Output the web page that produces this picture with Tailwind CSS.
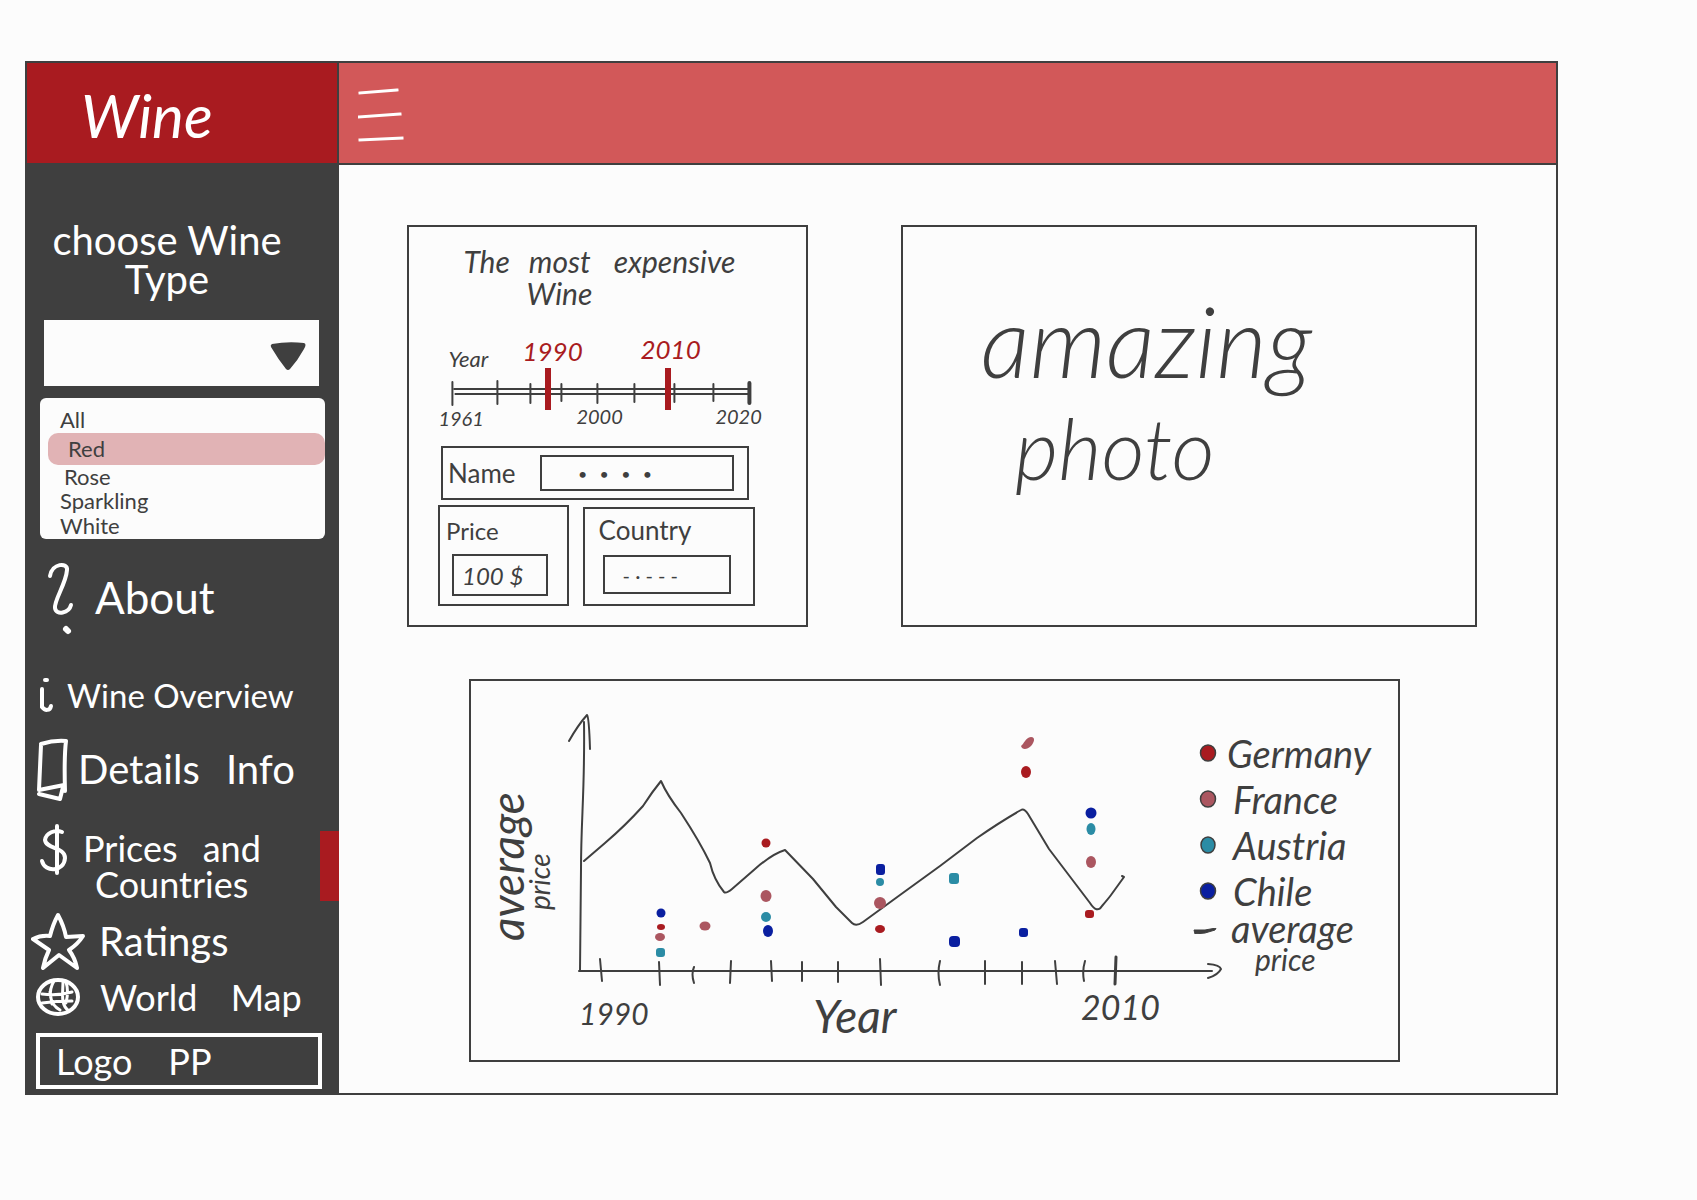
<!DOCTYPE html>
<html lang="en">
<head>
<meta charset="utf-8">
<meta name="viewport" content="width=device-width, initial-scale=1">
<title>Wine – Prices and Countries</title>
<script src="https://cdn.jsdelivr.net/npm/@tailwindcss/browser@4"></script>
</head>
<body class="min-h-screen bg-[#fcfcfc] pt-[61px] pr-[139px] pb-[60px] pl-[25px] font-['Lato','Open_Sans',sans-serif] text-[#3f3f3f]">
<div class="border-2 border-[#3f3f3f]">

  <header class="flex h-[102px] border-b-2 border-[#3f3f3f] bg-[#d25859]">
    <div class="flex w-[312px] shrink-0 items-center border-r-2 border-[#3f3f3f] bg-[#a91b20] pt-1 pl-[54px]">
      <a href="#" class="text-[60px] leading-[64px] text-white italic">Wine</a>
    </div>
    <button type="button" aria-label="Toggle menu" class="ml-[19px] self-center pt-0.5">
      <svg class="h-[56px] w-[48px]" viewBox="0 0 48 56" fill="none" stroke="#fff" stroke-width="3" stroke-linecap="square"><path d="M2 7L39 4M1 31L42 28M2 54L44 52"/></svg>
    </button>
  </header>

  <div class="flex">
    <aside class="flex w-[312px] shrink-0 flex-col bg-[#3f3f3f] pb-1 text-white">
      <label for="type" class="pt-[56px] pr-8 text-center text-[40px] leading-[39px]">choose Wine<br>Type</label>
      <div class="relative mt-[21px] mr-5 ml-[17px]">
        <select id="type" class="block h-[66px] w-full appearance-none bg-[#fcfcfc] px-4 text-[22px] text-[#3f3f3f]">
          <option></option><option>All</option><option>Red</option><option>Rose</option><option>Sparkling</option><option>White</option>
        </select>
        <svg class="pointer-events-none absolute top-[21px] right-3 h-[30px] w-[38px]" viewBox="0 0 38 30"><path d="M3 3Q19 0 35 2Q38 3 35 8Q29 19 21 28Q19 30 17 28Q9 18 2 6Q1 4 3 3Z" fill="#3f3f3f"/></svg>
      </div>
      <ul class="mt-3 mr-[14px] ml-[13px] rounded-[6px] bg-[#fcfcfc] pt-2 text-[22px] text-[#3f3f3f]">
        <li><button type="button" class="block h-[27px] w-full pl-[20px] text-left leading-[27px]">All</button></li>
        <li class="pl-2"><button type="button" aria-pressed="true" class="block h-8 w-full rounded-[10px] bg-[#e1b3b5] pl-[20px] text-left leading-8">Red</button></li>
        <li><button type="button" class="block h-6 w-full pl-[24px] text-left leading-6">Rose</button></li>
        <li><button type="button" class="block h-6 w-full pl-[20px] text-left leading-6">Sparkling</button></li>
        <li><button type="button" class="block h-[26px] w-full pl-[20px] text-left leading-[26px]">White</button></li>
      </ul>

      <nav class="mt-[16px] flex flex-col text-[40px] leading-[44px] whitespace-nowrap">
        <a href="#" class="flex h-[88px] items-center pl-[20px]">
          <svg class="mr-[20px] h-[74px] w-[28px]" viewBox="0 0 28 74" fill="none" stroke="#fff" stroke-width="4" stroke-linecap="round" stroke-linejoin="round"><path d="M3 14C5 1 21 0 20 8C19 22 7 38 8 46C9 54 22 51 24 43"/><path d="M19 67l2 2" stroke-width="6"/></svg>
          <span class="pb-1 text-[44px]">About</span>
        </a>
        <a href="#" class="mt-3 flex h-[80px] items-center pl-[12px]">
          <svg class="mr-[12px] h-[36px] w-[16px]" viewBox="0 0 16 36" fill="none" stroke="#fff" stroke-width="4" stroke-linecap="round"><path d="M6 3h2M3 12L3 30C6 34 11 34 12 29"/></svg>
          <span class="text-[33px]">Wine Overview</span>
        </a>
        <a href="#" class="flex h-[68px] items-center pl-[9px]">
          <svg class="mr-[8px] h-[64px] w-[34px]" viewBox="0 0 34 64" fill="none" stroke="#fff" stroke-width="4" stroke-linejoin="round" stroke-linecap="round"><path d="M5 7Q18 3 30 4Q28 20 29 54M5 8L3 53L28 48M3 57L24 62L27 50"/></svg>
          <span><span class="mr-4">Details</span> Info</span>
        </a>
        <a href="#" aria-current="page" class="mt-[20px] flex h-[86px] items-center pl-[12px] text-[36px]">
          <svg class="mr-[14px] h-[52px] w-[30px] self-start" viewBox="0 0 30 52" fill="none" stroke="#fff" stroke-width="4" stroke-linecap="round"><path d="M23 9C16 6 7 10 6 17C7 26 26 24 26 35C25 49 6 50 3 38M18 3L18 50"/></svg>
          <span class="leading-[36px]"><span class="mr-4">Prices</span> and<br><span class="ml-3">Countries</span></span>
          <span class="ml-auto h-[70px] w-[19px] bg-[#a91b20]"></span>
        </a>
        <a href="#" class="mt-0.5 flex h-[60px] items-center pl-[4px]">
          <svg class="mr-[14px] h-[58px] w-[54px]" viewBox="0 0 54 58" fill="none" stroke="#fff" stroke-width="4" stroke-linejoin="round"><path d="M27 3Q33 14 35 25L52 24Q47 32 38 38Q44 46 46 56L28 43L12 56Q14 46 18 38L2 27Q10 23 19 24Q22 12 27 3Z"/></svg>
          <span>Ratings</span>
        </a>
        <a href="#" class="flex h-[52px] items-center pl-[9px] text-[36px]">
          <svg class="mr-[20px] h-[40px] w-[44px]" viewBox="0 0 44 40" fill="none" stroke="#fff" stroke-width="4" stroke-linecap="round"><ellipse cx="22" cy="20" rx="20" ry="17"/><path stroke-width="3" d="M18 4C12 14 13 27 24 33M27 4C27 16 24 28 33 34M6 17Q22 19 36 15M6 26Q20 24 36 24M14 15L16 27M30 5Q33 14 30 26"/></svg>
          <span><span class="mr-6">World</span> Map</span>
        </a>
      </nav>
      <div class="mt-[10px] mr-[17px] ml-[9px] flex h-[56px] items-center border-4 border-white pl-4 text-[36px] leading-[40px]"><span class="mr-9">Logo</span> PP</div>
    </aside>

    <main class="min-w-0 flex-1 pb-[30px]">
      <div class="grid grid-cols-[minmax(0,400fr)_minmax(0,575fr)] gap-x-[93px] pt-[60px] pr-[79px] pl-[68px]">

        <section class="h-[402px] border-2 border-[#3f3f3f] pt-[18px]">
          <h2 class="pr-4 text-center text-[30px] leading-8 whitespace-nowrap italic"><span class="mr-3">The</span> <span class="mr-4">most</span> expensive<br><span class="mr-20">Wine</span></h2>

          <div class="relative mt-[30px] mr-[38px] ml-[24px] h-[112px]">
            <svg class="block h-full w-full overflow-visible" viewBox="433 338 334 112" fill="none" stroke="#3f3f3f" stroke-width="2" stroke-linecap="round">
              <g stroke="none" fill="#3f3f3f" font-style="italic" font-size="20">
                <text x="448" y="366" font-size="22">Year</text>
                <text x="438" y="425">1961</text><text x="576" y="423">2000</text><text x="715" y="423">2020</text>
                <g fill="#a91b20" font-size="26"><text x="522" y="360">1990</text><text x="640" y="358">2010</text></g>
              </g>
              <path d="M454 388H748M455 393H748M452 381V404M497 380V403M530 383V402M561 383V400M597 383V402M634 383V401M674 383V401M713 383V400"/>
              <path d="M749 382V402" stroke-width="4"/>
            </svg>
            <input type="range" aria-label="From year" aria-valuetext="1990" min="0" max="100" value="32" class="pointer-events-none absolute top-[28px] left-[19px] h-[44px] w-[89%] appearance-none bg-transparent [&::-webkit-slider-thumb]:pointer-events-auto [&::-webkit-slider-thumb]:h-[42px] [&::-webkit-slider-thumb]:w-[6px] [&::-webkit-slider-thumb]:appearance-none [&::-webkit-slider-thumb]:bg-[#a91b20]">
            <input type="range" aria-label="To year" aria-valuetext="2010" min="0" max="100" value="73" class="pointer-events-none absolute top-[28px] left-[19px] h-[44px] w-[89%] appearance-none bg-transparent [&::-webkit-slider-thumb]:pointer-events-auto [&::-webkit-slider-thumb]:h-[42px] [&::-webkit-slider-thumb]:w-[6px] [&::-webkit-slider-thumb]:appearance-none [&::-webkit-slider-thumb]:bg-[#a91b20]">
          </div>

          <div class="-mt-[5px] mr-[57px] ml-[32px] flex h-[54px] items-center border-2 border-[#3f3f3f] pr-[13px] pl-[5px]">
            <label for="name" class="w-[92px] text-[26px]">Name</label>
            <input id="name" value="•   •   •   •" class="h-[36px] min-w-0 flex-1 border-2 border-[#3f3f3f] pl-[36px] text-[16px]">
          </div>
          <div class="mt-[5px] mr-[51px] ml-[29px] flex items-start gap-[14px]">
            <div class="h-[101px] min-w-0 flex-[129] border-2 border-[#3f3f3f] pt-[8px] pr-[19px] pl-[12px]">
              <label for="price" class="-ml-[6px] block text-[24px] leading-8">Price</label>
              <input id="price" value="100 $" class="mt-[7px] h-[42px] w-full border-2 border-[#3f3f3f] pl-[8px] text-[24px] italic">
            </div>
            <div class="mt-[2px] h-[99px] min-w-0 flex-[173] border-2 border-[#3f3f3f] pt-[5px] pr-[22px] pl-[18px]">
              <label for="country" class="-ml-[4px] block text-[26px] leading-8">Country</label>
              <input id="country" value="- · - - -" class="mt-[9px] h-[39px] w-full border-2 border-[#3f3f3f] pl-[18px] text-[20px]">
            </div>
          </div>
        </section>

        <section class="flex h-[402px] flex-col border-2 border-[#3f3f3f] pt-[60px] leading-[107px] font-light italic">
          <span class="pl-[78px] text-[98px]">amazing</span>
          <span class="pl-[112px] text-[84px]">photo</span>
        </section>
      </div>

      <section class="mt-[52px] mr-[156px] ml-[130px] flex h-[383px] border-2 border-[#3f3f3f]">
        <svg class="h-full min-w-0 flex-[720] overflow-visible" viewBox="471 682 720 379" fill="none" stroke="#3f3f3f" stroke-width="2" stroke-linecap="round" stroke-linejoin="round" role="img" aria-label="Average price by year">
          <path d="M584 723C585 790 581 820 581 870L580 972M569 742Q578 726 587 716Q589 718 590 750"/>
          <path d="M579 972H1212M1208 965Q1220 966 1221 970Q1218 976 1208 979"/>
          <path d="M600 960L602 982M659 963L660 986M694 968Q691 975 694 984M731 962L730 984M771 962L772 982M802 963V982M838 963V983M880 960L881 986M940 962Q937 974 940 986M985 962V985M1022 963V985M1055 962L1057 985M1085 962Q1082 972 1084 982"/>
          <path d="M1116 958L1115 985" stroke-width="3"/>
          <path d="M584 862L605 844Q625 827 643 807Q652 793 661 782Q667 796 681 814Q700 843 710 864Q714 881 724 893Q726 895 732 890L755 870Q772 855 785 851L813 880L836 908L852 924Q856 928 863 923L900 896L940 867L977 839Q1000 823 1021 811Q1024 809 1028 815L1049 850L1090 904Q1097 915 1102 907Q1108 900 1111 896L1124 878L1122 877"/>
          <g stroke="none">
            <g fill="#a91b20"><ellipse cx="661" cy="928" rx="4" ry="3"/><circle cx="766" cy="844" r="4.500"/><ellipse cx="880" cy="930" rx="5" ry="4"/><ellipse cx="1026" cy="773" rx="5" ry="6"/><rect x="1085" y="911" width="9" height="8" rx="3"/></g>
            <g fill="#ab5660"><ellipse cx="660" cy="938" rx="5" ry="4"/><ellipse cx="705" cy="927" rx="5.500" ry="4.500"/><ellipse cx="766" cy="897" rx="5.500" ry="6"/><circle cx="880" cy="904" r="6"/><path d="M1021 747C1024 745 1025 739 1031 738C1036 738 1034 744 1031 747C1027 751 1022 751 1021 747Z"/><ellipse cx="1091" cy="863" rx="5" ry="6"/></g>
            <g fill="#2b8ca5"><rect x="656" y="949" width="9" height="9" rx="3"/><circle cx="766" cy="918" r="5"/><circle cx="880" cy="883" r="4"/><rect x="949" y="874" width="10" height="11" rx="3"/><ellipse cx="1091" cy="830" rx="4.500" ry="6"/></g>
            <g fill="#0a1fa0"><circle cx="661" cy="914" r="4.500"/><ellipse cx="768" cy="932" rx="5" ry="6"/><rect x="876" y="865" width="9" height="11" rx="3"/><rect x="949" y="937" width="11" height="11" rx="4"/><rect x="1019" y="929" width="9" height="9" rx="3"/><circle cx="1091" cy="814" r="5.500"/></g>
          </g>
          <g stroke="none" fill="#3f3f3f" font-style="italic">
            <text x="579" y="1026" font-size="30">1990</text>
            <text x="813" y="1034" font-size="46">Year</text>
            <text x="1081" y="1021" font-size="34">2010</text>
            <text transform="translate(524 942) rotate(-90)" font-size="46">average</text>
            <text transform="translate(550 911) rotate(-90)" font-size="28">price</text>
          </g>
        </svg>
        <ul class="min-w-0 flex-[207] pt-[49px] text-[38px] leading-[46px] whitespace-nowrap italic">
          <li class="flex items-center gap-[10px] pl-[8px]"><svg class="size-[18px] shrink-0" viewBox="0 0 18 18"><ellipse cx="9" cy="9" rx="7.500" ry="8" fill="#a91b20" stroke="#3f3f3f" stroke-width="1.500"/></svg>Germany</li>
          <li class="flex items-center gap-[16px] pl-[8px]"><svg class="size-[18px] shrink-0" viewBox="0 0 18 18"><ellipse cx="9" cy="9" rx="7.500" ry="8" fill="#ab5660" stroke="#3f3f3f" stroke-width="1.500"/></svg>France</li>
          <li class="flex items-center gap-[16px] pl-[8px]"><svg class="size-[18px] shrink-0" viewBox="0 0 18 18"><ellipse cx="9" cy="9" rx="7" ry="8" fill="#2b8ca5" stroke="#3f3f3f" stroke-width="1.500"/></svg>Austria</li>
          <li class="flex items-center gap-[16px] pl-[8px]"><svg class="size-[18px] shrink-0" viewBox="0 0 18 18"><ellipse cx="9" cy="9" rx="7.500" ry="8" fill="#0a1fa0" stroke="#3f3f3f" stroke-width="1.500"/></svg>Chile</li>
          <li class="flex items-start gap-[14px] pl-[2px] leading-[28px]"><svg class="mt-[14px] h-[6px] w-[24px] shrink-0" viewBox="0 0 24 6"><path d="M1 2L12 2L23 0L22 2L12 5L2 6Z" fill="#3f3f3f" stroke="#3f3f3f"/></svg><span>average<br><span class="ml-6 text-[30px]">price</span></span></li>
        </ul>
      </section>
    </main>
  </div>
</div>
</body>
</html>
